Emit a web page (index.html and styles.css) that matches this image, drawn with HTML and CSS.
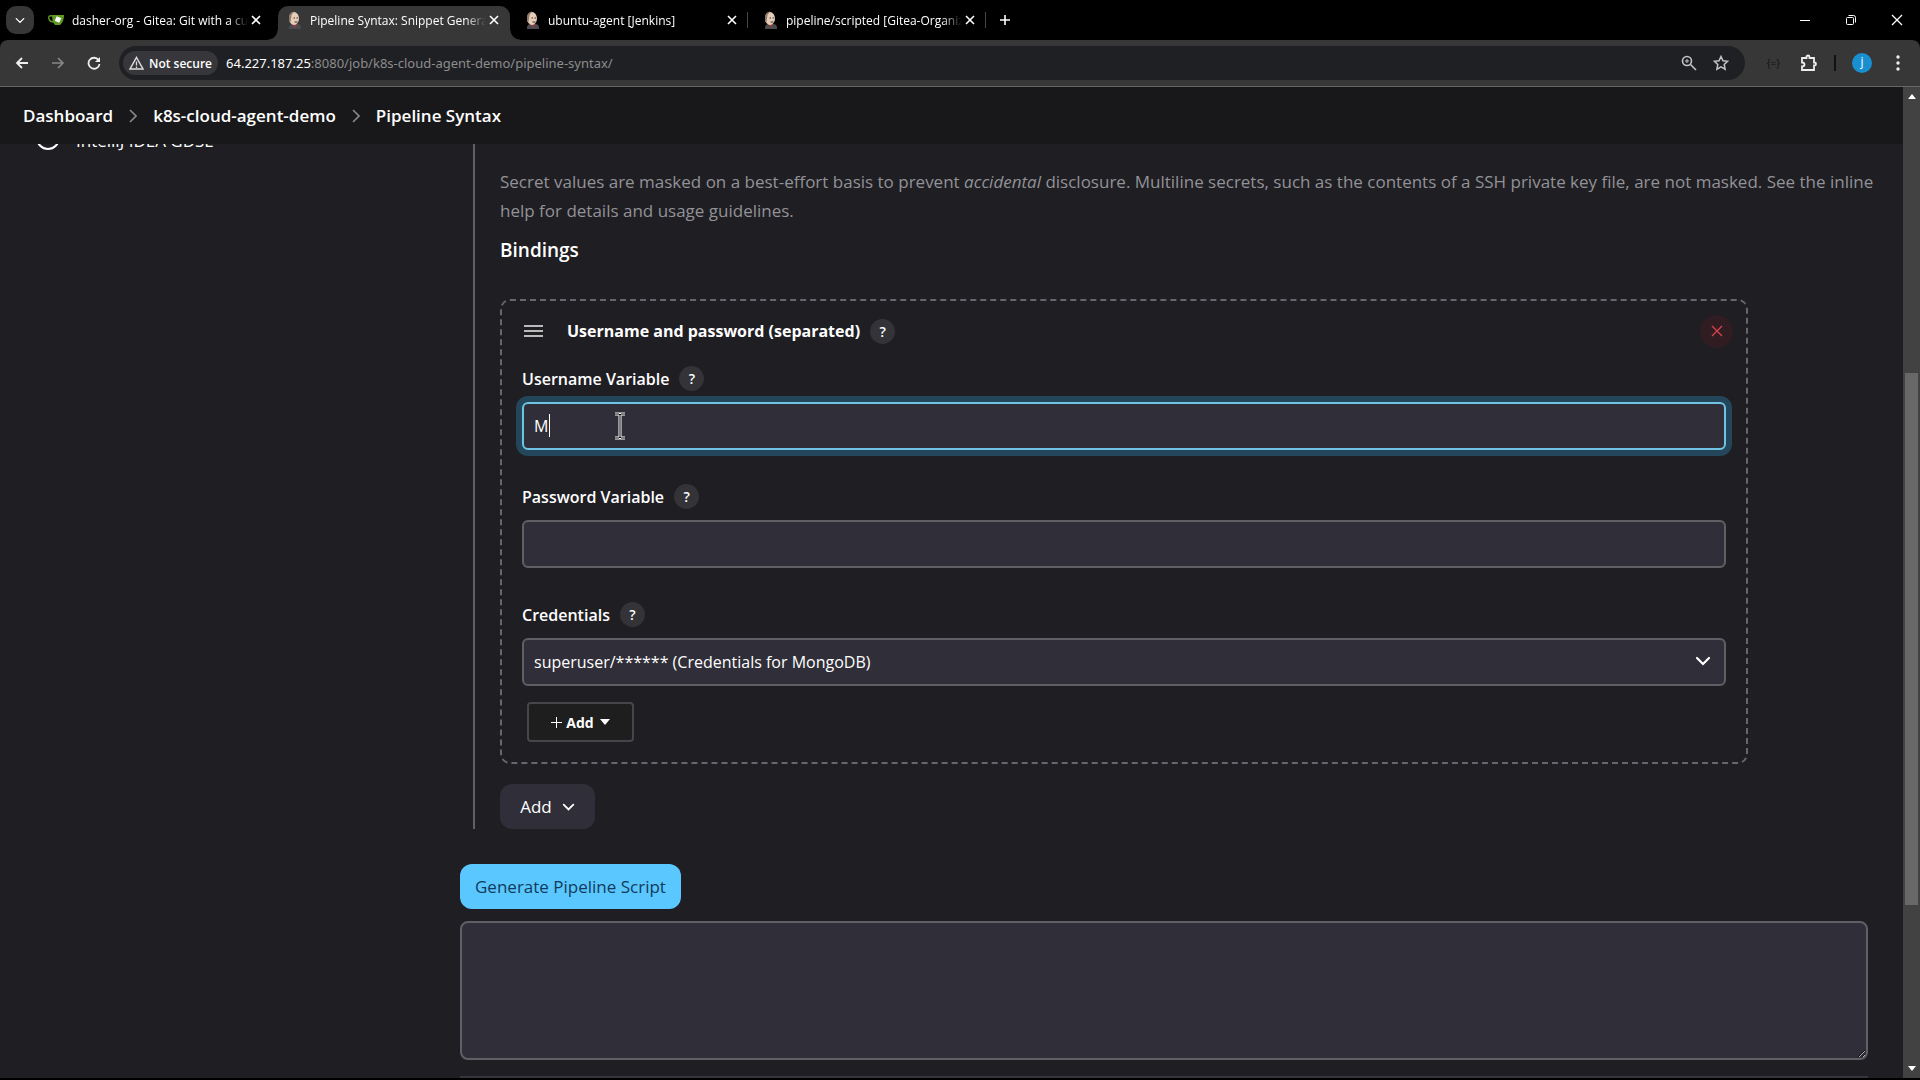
FILE: index.html
```
<!DOCTYPE html>
<html lang="en">
<head>
    <meta charset="UTF-8">
    <meta name="viewport" content="width=device-width, initial-scale=1.0">
    <title>Pipeline Syntax: Snippet Generator [Jenkins]</title>
    <link rel="stylesheet" href="styles.css">
</head>
<body>
    <!-- shared icons -->
    <svg class="defs" width="0" height="0" aria-hidden="true">
        <symbol id="icon-jenkins" viewBox="0 0 16 18">
            <path d="M3 17q0-4 4-4h4q4 0 4 4v1H3z" fill="#4a4a50"/>
            <path d="M7 13l2 4 2-4z" fill="#a33"/>
            <ellipse cx="8" cy="7.500" rx="5" ry="6.500" fill="#e6cdb8"/>
            <path d="M3 11V5q1-4 5-4.500L5.500 4 4.500 11z" fill="#8d7a6c"/>
            <path d="M7.500 7h1.500M10.500 7h1.500M8.500 11h3" stroke="#4b352d" stroke-width="1"/>
        </symbol>
        <symbol id="icon-x" viewBox="0 0 10 10">
            <path d="M1 1l8 8M9 1L1 9" stroke="currentColor" stroke-width="1.600" fill="none"/>
        </symbol>
        <symbol id="icon-x-thin" viewBox="0 0 12 12">
            <path d="M1 1l10 10M11 1L1 11" stroke="currentColor" stroke-width="1.300" fill="none"/>
        </symbol>
        <symbol id="icon-chevron" viewBox="0 0 16 10">
            <path d="M2 2l6 6 6-6" stroke="currentColor" stroke-width="2.200" fill="none" stroke-linecap="round"/>
        </symbol>
        <symbol id="icon-next" viewBox="0 0 8 14">
            <path d="M1 1l6 6-6 6" stroke="currentColor" stroke-width="1.600" fill="none"/>
        </symbol>
    </svg>

    <header class="browser">
        <div class="tabs">
            <button class="tab-search" aria-label="Search tabs"><svg width="10" height="7"><use href="#icon-chevron"/></svg></button>
            <div class="tab first">
                <svg class="favicon" width="16" height="18" viewBox="0 0 16 18">
                    <path d="M4 5Q0 4 1 8q1 3 5 3" fill="none" stroke="#609926" stroke-width="1.500"/>
                    <path d="M4 4l12 0q0 7-4 10H7Q4 11 4 4z" fill="#609926"/>
                    <rect x="7.500" y="6" width="5" height="5" fill="#fff" transform="rotate(25 10 8.500)"/>
                </svg>
                <span class="tab-title">dasher-org - Gitea: Git with a cu</span>
                <button aria-label="Close tab"><svg width="10" height="10"><use href="#icon-x"/></svg></button>
            </div>
            <div class="tab active">
                <svg class="favicon" width="16" height="18"><use href="#icon-jenkins"/></svg>
                <span class="tab-title">Pipeline Syntax: Snippet Genera</span>
                <button aria-label="Close tab"><svg width="10" height="10"><use href="#icon-x"/></svg></button>
            </div>
            <div class="tab divided">
                <svg class="favicon" width="16" height="18"><use href="#icon-jenkins"/></svg>
                <span class="tab-title">ubuntu-agent [Jenkins]</span>
                <button aria-label="Close tab"><svg width="10" height="10"><use href="#icon-x"/></svg></button>
            </div>
            <div class="tab divided">
                <svg class="favicon" width="16" height="18"><use href="#icon-jenkins"/></svg>
                <span class="tab-title">pipeline/scripted [Gitea-Organiz</span>
                <button aria-label="Close tab"><svg width="10" height="10"><use href="#icon-x"/></svg></button>
            </div>
            <button class="new-tab" aria-label="New tab"><svg width="12" height="12" viewBox="0 0 12 12"><path d="M6 1v10M1 6h10" stroke="#fff" stroke-width="1.600"/></svg></button>
            <div class="window-buttons">
                <button aria-label="Minimize"><svg width="12" height="12" viewBox="0 0 12 12"><path d="M1 6.500h10" stroke="#fff"/></svg></button>
                <button aria-label="Restore"><svg width="12" height="12" viewBox="0 0 12 12"><g fill="none" stroke="#fff"><rect x="1.500" y="3.500" width="7" height="7" rx="1"/><path d="M3.500 1.500h5q2 0 2 2v5"/></g></svg></button>
                <button aria-label="Close"><svg width="12" height="12"><use href="#icon-x-thin"/></svg></button>
            </div>
        </div>
        <div class="toolbar">
            <button aria-label="Back"><svg width="14" height="14" viewBox="0 0 14 14"><path d="M13 7H2M7 2L2 7l5 5" stroke="#eee" stroke-width="1.800" fill="none"/></svg></button>
            <button aria-label="Forward"><svg width="14" height="14" viewBox="0 0 14 14"><path d="M1 7h11M7 2l5 5-5 5" stroke="#888" stroke-width="1.600" fill="none"/></svg></button>
            <button aria-label="Reload"><svg width="14" height="14" viewBox="0 0 14 14"><path d="M11.500 4A5.500 5.500 0 1 0 12.500 8" stroke="#eee" stroke-width="1.800" fill="none"/><path d="M13 1v5H8z" fill="#eee"/></svg></button>
            <div class="omnibox">
                <span class="chip">
                    <svg width="15" height="14" viewBox="0 0 15 14"><path d="M7.500 1.500L14 13H1z" fill="none" stroke="#ddd" stroke-width="1.500"/><path d="M7.500 5.500v4M7.500 10.500v1.500" stroke="#ddd" stroke-width="1.300"/></svg>
                    Not secure
                </span>
                <span class="url"><b>64.227.187.25</b>:8080/job/k8s-cloud-agent-demo/pipeline-syntax/</span>
                <svg width="16" height="16" viewBox="0 0 16 16"><g fill="none" stroke="#c4c4c4" stroke-width="1.600"><circle cx="6" cy="6" r="4.500"/><path d="M9.500 9.500L15 15"/></g><path d="M6 4v4M4 6h4" stroke="#c4c4c4"/></svg>
                <svg width="16" height="16" viewBox="0 0 16 16"><path d="M8 1.500l2 4.300 4.600.5-3.400 3.200.9 4.700L8 11.900l-4.100 2.300.9-4.700L1.400 6.300 6 5.800z" fill="none" stroke="#c4c4c4" stroke-width="1.500"/></svg>
            </div>
            <div class="extensions">
                <span class="ext-off">{=}</span>
                <button aria-label="Extensions"><svg width="18" height="18" viewBox="0 0 18 18"><path d="M2 4h4.500V3a1.500 1.500 0 0 1 3 0v1H14v4.500h.5a1.500 1.500 0 0 1 0 3H14V16H2v-3.500q2.500 0 2.500-2T2 8.500z" fill="none" stroke="#eee" stroke-width="1.800"/></svg></button>
                <span class="bar"></span>
                <span class="avatar">j</span>
                <button class="menu" aria-label="Menu"><svg width="4" height="16" viewBox="0 0 4 16"><g fill="#eee"><circle cx="2" cy="2" r="1.700"/><circle cx="2" cy="8" r="1.700"/><circle cx="2" cy="14" r="1.700"/></g></svg></button>
            </div>
        </div>
    </header>

    <div class="viewport">
        <div class="page">
            <nav class="breadcrumbs">
                <a href="#">Dashboard</a>
                <svg width="8" height="14"><use href="#icon-next"/></svg>
                <a href="#">k8s-cloud-agent-demo</a>
                <svg width="8" height="14"><use href="#icon-next"/></svg>
                <a href="#">Pipeline Syntax</a>
            </nav>
            <div class="content">
                <aside class="side-panel">
                    <a href="#">
                        <svg width="24" height="24" viewBox="0 0 24 24"><circle cx="12" cy="12" r="11" fill="none" stroke="#fff" stroke-width="2"/><path d="M12 5v11M8 12l4 4 4-4" fill="none" stroke="#fff" stroke-width="2"/></svg>
                        IntelliJ IDEA GDSL
                    </a>
                </aside>
                <main>
                    <section class="nested">
                        <p class="description">Secret values are masked on a best-effort basis to prevent <em>accidental</em> disclosure. Multiline secrets, such as the contents of a SSH private key file, are not masked. See the inline help for details and usage guidelines.</p>
                        <h2>Bindings</h2>
                        <div class="binding">
                            <div class="binding-head">
                                <svg width="19" height="12" viewBox="0 0 19 12"><path d="M0 1h19M0 6h19M0 11h19" stroke="#eee" stroke-width="1.600"/></svg>
                                <b>Username and password (separated)</b>
                                <button class="help" aria-label="Help">?</button>
                                <button class="delete" aria-label="Delete"><svg width="12" height="12"><use href="#icon-x-thin"/></svg></button>
                            </div>
                            <div class="label-row"><label for="username-variable">Username Variable</label><button class="help" aria-label="Help">?</button></div>
                            <div class="field">
                                <input type="text" class="focused" id="username-variable" value="M">
                                <span class="caret"></span>
                                <svg class="mouse" width="12" height="28" viewBox="0 0 12 28"><path d="M1 2h4l1 1 1-1h4M6 3v22M1 26h4l1-1 1 1h4" fill="none" stroke="#fff" stroke-width="3"/><path d="M1 2h4l1 1 1-1h4M6 3v22M1 26h4l1-1 1 1h4" fill="none" stroke="#000" stroke-width="1"/></svg>
                            </div>
                            <div class="label-row"><label for="password-variable">Password Variable</label><button class="help" aria-label="Help">?</button></div>
                            <div class="field">
                                <input type="text" id="password-variable">
                            </div>
                            <div class="label-row"><label for="credentials">Credentials</label><button class="help" aria-label="Help">?</button></div>
                            <div class="field select">
                                <select id="credentials">
                                    <option>superuser/****** (Credentials for MongoDB)</option>
                                </select>
                                <svg class="arrow" width="16" height="10"><use href="#icon-chevron"/></svg>
                            </div>
                            <button class="add-credentials">
                                <svg width="11" height="11" viewBox="0 0 11 11"><path d="M5.500 0v11M0 5.500h11" stroke="#fff"/></svg>
                                Add
                                <svg class="triangle" width="10" height="6" viewBox="0 0 10 6"><path d="M0 0h10L5 6z" fill="#fff"/></svg>
                            </button>
                        </div>
                        <button class="add">Add <svg width="13" height="8"><use href="#icon-chevron"/></svg></button>
                    </section>
                    <button class="generate">Generate Pipeline Script</button>
                    <textarea aria-label="Pipeline script"></textarea>
                    <hr>
                </main>
            </div>
        </div>
        <div class="scrollbar">
            <svg width="8" height="5" viewBox="0 0 8 5"><path d="M0 5h8L4 0z" fill="#fff"/></svg>
            <div class="track"><div class="thumb"></div></div>
            <svg width="8" height="5" viewBox="0 0 8 5"><path d="M0 0h8L4 5z" fill="#fff"/></svg>
        </div>
    </div>
</body>
</html>
```
FILE: styles.css
```
* {
    box-sizing: border-box;
}

body {
    margin: 0;
    height: 100vh;
    display: flex;
    flex-direction: column;
    overflow: hidden;
    background-color: #000;
    border-bottom: 2px solid #000;
    color: #fff;
    font-family: "Open Sans", "Noto Sans", sans-serif;
    font-size: 17px;
}

button, input, select, textarea {
    font: inherit;
    color: inherit;
}

button {
    display: flex;
    align-items: center;
    justify-content: center;
    padding: 0;
    border: none;
    background: none;
}

svg {
    flex: none;
}

.defs {
    position: absolute;
}

/* Browser window */
.tabs {
    display: flex;
    align-items: center;
    height: 40px;
    font-size: 12px;
}

.tab-search {
    width: 28px;
    height: 28px;
    margin: 0 6px;
    border-radius: 10px;
    background-color: #373737;
}

.tab {
    position: relative;
    display: flex;
    align-items: center;
    width: 238px;
    height: 34px;
    margin-top: 6px;
    padding: 0 11px 6px 8px;
}

.tab.first {
    padding-right: 17px;
}

.tab.active {
    width: 232px;
    border-radius: 10px 10px 0 0;
    background-color: #373737;
}

.tab.divided {
    padding-left: 14px;
}

/* little feet of the active tab */
.tab.active::before, .tab.active::after {
    content: "";
    position: absolute;
    bottom: 0;
    width: 10px;
    height: 10px;
}

.tab.active::before {
    left: -10px;
    background: radial-gradient(circle at 0 0, transparent 9px, #373737 10px);
}

.tab.active::after {
    right: -10px;
    background: radial-gradient(circle at 100% 0, transparent 9px, #373737 10px);
}

.tab.divided::after {
    content: "";
    position: absolute;
    right: 0;
    top: 6px;
    width: 1px;
    height: 16px;
    background-color: #444;
}

.favicon {
    margin-right: 8px;
}

.tab-title {
    flex: 1;
    min-width: 0;
    white-space: nowrap;
    -webkit-mask-image: linear-gradient(to right, #000 156px, transparent 176px);
    mask-image: linear-gradient(to right, #000 156px, transparent 176px);
}

.new-tab {
    margin-left: 13px;
}

.window-buttons {
    display: flex;
    gap: 34px;
    margin-left: auto;
    padding-right: 17px;
}

.toolbar {
    display: flex;
    align-items: center;
    height: 47px;
    padding: 0 20px 0 15px;
    gap: 22px;
    background-color: #373737;
    border-bottom: 1px solid #666;
    border-radius: 8px 8px 0 0;
}

.omnibox {
    flex: 1;
    display: flex;
    align-items: center;
    gap: 16px;
    height: 34px;
    margin-left: -4px;
    padding: 0 16px 0 4px;
    border-radius: 17px;
    background-color: #1f2024;
}

.chip {
    display: flex;
    align-items: center;
    gap: 5px;
    height: 24px;
    padding: 0 6px;
    margin-right: -8px;
    border-radius: 12px;
    background-color: #37373b;
    font-size: 12px;
    font-weight: 600;
}

.url {
    flex: 1;
    font-family: "Noto Sans", "Open Sans", sans-serif;
    font-size: 13px;
    color: #8d8d8d;
}

.url b {
    font-weight: 400;
    color: #fff;
}

.extensions {
    display: flex;
    align-items: center;
    gap: 16px;
}

.ext-off {
    margin-right: 4px;
    font-size: 10px;
    color: #111;
}

.bar {
    width: 2px;
    height: 16px;
    background-color: #111;
}

.avatar {
    width: 20px;
    height: 20px;
    border-radius: 50%;
    background-color: #1a8fd0;
    font-size: 12px;
    line-height: 18px;
    text-align: center;
}

.menu {
    margin-left: 8px;
}

/* Page */
.viewport {
    flex: 1;
    display: flex;
    min-height: 0;
}

.page {
    flex: 1;
    overflow: hidden;
    background-color: #1f1e23;
}

.breadcrumbs {
    position: relative;
    z-index: 1;
    display: flex;
    align-items: center;
    gap: 16px;
    height: 57px;
    padding: 0 23px;
    background-color: #18181a;
    color: #888;
    font-weight: 600;
}

a {
    color: #fff;
    text-decoration: none;
}

.content {
    display: flex;
    padding-right: 35px;
}

/* scrolled up under the breadcrumbs */
.side-panel {
    flex: none;
    width: 460px;
    margin-top: -24px;
    padding-left: 36px;
}

.side-panel a {
    display: flex;
    align-items: center;
    gap: 16px;
    height: 40px;
}

.side-panel svg {
    margin-bottom: 4px;
}

main {
    flex: 1;
}

.nested {
    margin-left: 13px;
    padding: 23px 0 0 25px;
    border-left: 2px solid #5f5f66;
}

.description {
    margin: 0 -16px 0 0;
    line-height: 29px;
    color: #929297;
}

h2 {
    margin: 11px 0 34px;
    font-size: 19px;
    font-weight: 600;
    line-height: 29px;
}

.binding {
    margin-right: 120px;
    padding: 13px 20px 20px;
    border: 2px dashed #66666c;
    border-radius: 10px;
    font-size: 16px;
}

.binding-head {
    display: flex;
    align-items: center;
    height: 34px;
    padding-left: 2px;
}

.binding-head b {
    margin: 0 10px 0 24px;
}

.help {
    width: 25px;
    height: 25px;
    border-radius: 50%;
    background-color: #343338;
    font-size: 14px;
    font-weight: 600;
}

.delete {
    width: 33px;
    height: 33px;
    margin: 0 -7px 0 auto;
    border-radius: 50%;
    background-color: #2f1d22;
    color: #d9434e;
}

.label-row {
    display: flex;
    align-items: center;
    gap: 10px;
    height: 25px;
    margin: 18px 0 11px;
    font-weight: 600;
}

.field {
    position: relative;
    margin-bottom: 34px;
}

.field input, .field select {
    display: block;
    width: 100%;
    height: 48px;
    padding: 0 10px;
    border: 2px solid #5f5f66;
    border-radius: 6px;
    background-color: #302e38;
    outline: none;
    appearance: none;
}

.field .focused {
    border-color: #6fc3e4;
    box-shadow: 0 0 0 6px #24465a;
}

.caret {
    position: absolute;
    left: 27px;
    top: 12px;
    width: 1px;
    height: 23px;
    background-color: #fff;
}

.mouse {
    position: absolute;
    left: 92px;
    top: 10px;
}

.arrow {
    position: absolute;
    right: 15px;
    top: 18px;
}

.field.select {
    margin-bottom: 16px;
}

.add-credentials {
    gap: 4px;
    width: 107px;
    height: 40px;
    margin-left: 5px;
    border: 2px solid #46464a;
    border-radius: 4px;
    background-color: #1e1e1e;
    font-size: 14px;
    font-weight: 700;
}

.triangle {
    margin-left: 2px;
}

.add {
    gap: 10px;
    width: 95px;
    height: 45px;
    margin-top: 20px;
    border-radius: 12px;
    background-color: #302e38;
}

.generate {
    height: 45px;
    margin: 35px 0 12px;
    padding: 0 15px;
    border-radius: 12px;
    background-color: #5ac8ff;
    color: #123a5c;
}

textarea {
    display: block;
    width: 100%;
    height: 139px;
    border: 2px solid #5f5f66;
    border-radius: 8px;
    background-color: #302e38;
}

hr {
    margin: 16px 0;
    border: none;
    border-top: 2px solid #35353b;
}

.scrollbar {
    display: flex;
    flex-direction: column;
    align-items: center;
    width: 17px;
    padding: 7px 0;
    background-color: #424242;
}

.track {
    flex: 1;
    width: 13px;
}

.thumb {
    height: 55%;
    margin-top: 274px;
    background-color: #686868;
}
```
